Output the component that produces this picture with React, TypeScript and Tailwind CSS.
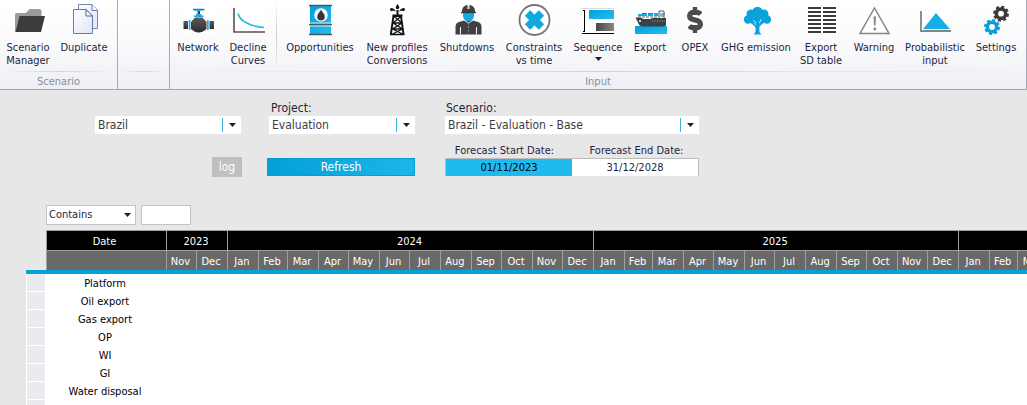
import type { ReactNode } from "react";
import { FaDollarSign } from "react-icons/fa";

const DAYS = [31, 28, 31, 30, 31, 30, 31, 31, 30, 31, 30, 31];
const NAMES = ["Jan", "Feb", "Mar", "Apr", "May", "Jun", "Jul", "Aug", "Sep", "Oct", "Nov", "Dec"];

type Year = { year: number; first: number };
const YEARS: Year[] = [
  { year: 2023, first: 10 },
  { year: 2024, first: 0 },
  { year: 2025, first: 0 },
  { year: 2026, first: 0 },
];

const daysIn = (year: number, month: number) =>
  month === 1 && year % 4 === 0 ? 29 : DAYS[month];

const MONTHS = YEARS.flatMap(({ year, first }) =>
  NAMES.map((name, month) => ({ year, month, name, days: daysIn(year, month) })).filter(
    (m) => m.month >= first,
  ),
);
const TOTAL_DAYS = MONTHS.reduce((sum, m) => sum + m.days, 0);

const ROWS = ["Platform", "Oil export", "Gas export", "OP", "WI", "GI", "Water disposal", ""];

function Icon({ children }: { children: ReactNode }) {
  return (
    <svg viewBox="0 0 32 32" className="size-8 shrink-0 overflow-visible" aria-hidden="true">
      {children}
    </svg>
  );
}

function Gradients() {
  return (
    <svg className="absolute size-0" aria-hidden="true">
      <defs>
        <linearGradient id="blue" x1="0" y1="0" x2="1" y2="1">
          <stop offset="0" stopColor="#009fd9" />
          <stop offset="1" stopColor="#27bdf0" />
        </linearGradient>
        <linearGradient id="dark" x1="0" y1="0" x2="0" y2="1">
          <stop offset="0" stopColor="#5c5c5c" />
          <stop offset="1" stopColor="#2c2c2c" />
        </linearGradient>
        <linearGradient id="gray" x1="0" y1="0" x2="1" y2="0">
          <stop offset="0" stopColor="#4a4646" />
          <stop offset="1" stopColor="#8a8686" />
        </linearGradient>
        <linearGradient id="page" x1="0" y1="0" x2="1" y2="1">
          <stop offset="0" stopColor="#ffffff" />
          <stop offset="1" stopColor="#dde6f5" />
        </linearGradient>
      </defs>
    </svg>
  );
}

const folder = (
  <Icon>
    <path d="M3 28V10.500q0-1.500 1.500-1.500H14l3.500-4H28l1.500 1.500V14H8L4 28z" fill="#9b9b9b" />
    <path d="M7.500 12H33l-4 16H3.500z" fill="#3b3b3b" />
  </Icon>
);

const duplicate = (
  <Icon>
    <path d="M10.500 .5H24l5.500 5.500v18.500h-19z" fill="url(#page)" stroke="#7587b5" />
    <path d="M24 .5v6h5.500" fill="#fff" stroke="#5f74a8" />
    <path d="M5.500 5.500H18l6.500 6.500v17.500h-19z" fill="url(#page)" stroke="#6479af" />
    <path d="M18 5.500v6.500h6.500z" fill="#fff" stroke="#4f659f" />
  </Icon>
);

const valve = (
  <Icon>
    <rect x="-1" y="3" width="34" height="26" fill="#fff" />
    <path d="M11 5.500h11.500" stroke="#3d7890" strokeWidth="1.500" />
    <path d="M12.500 6.500h8" stroke="#37b9e8" />
    <path d="M15.500 7h2.500v5h-2.500z" fill="#3a4a52" />
    <path d="M14 10h5.500v1.500h2V13H12v-1.500h2z" fill="#25a7dc" />
    <path d="M13 13.500h7.500l4 4.500v7l-3.500 2.500q-4.500 2-8.500 0L9 25v-7z" fill="url(#dark)" />
    <path d="M1.500 17H6v8H1.500zM27.500 17H32v8h-4.500z" fill="url(#dark)" />
    <path d="M6.800 16h1.700v10H6.800zM25 16h1.700v10H25z" fill="#1fb0e8" />
  </Icon>
);

const decline = (
  <Icon>
    <rect x="1" y="4" width="32" height="24" fill="#fff" />
    <path d="M2 4v24h31" fill="none" stroke="#595252" strokeWidth="1.600" />
    <path d="M6 9.500C8 18 20 22.500 32 23.500" fill="none" stroke="#23b7ec" strokeWidth="1.600" />
  </Icon>
);

const barrel = (
  <Icon>
    <rect x="6" y="2" width="21" height="28" fill="url(#blue)" />
    <path d="M5 1.500h23M5 20.500h23M5 30.500h23" stroke="#4b555a" strokeWidth="1.500" />
    <path d="M5 22h23M5 19h23" stroke="#fff" strokeWidth=".8" />
    <circle cx="17" cy="11" r="6.800" fill="#eefaff" />
    <path d="M17 5.500c1 2.700 3.800 4.500 3.800 7.200a3.800 3.800 0 0 1-7.600 0c0-2.700 2.800-4.500 3.800-7.200z" fill="#353535" />
  </Icon>
);

const derrick = (
  <Icon>
    <g fill="none" stroke="#111">
      <path d="M12.500 12h7.500l2.500 18.500M12.500 12L9.800 30.500" strokeWidth="1.900" />
      <path d="M12.500 12l8.500 7-9.500 6 11 5.500M20.500 12l-8.500 7 9.500 6-11 5.500M11.500 19h9.500M10.500 25h12M9 30.500h14.500" strokeWidth="1.300" />
      <path d="M11.500 11.500h10" strokeWidth="2" />
    </g>
    <path d="M15.500 6h2v5h-2z" fill="#111" />
    <path d="M16.500 0q2.500 3 1.500 4.500-1.500 1.500-3 0-1-1.500 1.500-4.500z" fill="#111" />
    <path d="M15 7.500q-1.500-3-4-3.500-2.500 0-2 2 1.500 2 3 .5zM18 7.500q1.500-3 4-3.500 2.500 0 2 2-1.500 2-3 .5z" fill="#111" />
  </Icon>
);

const worker = (
  <Icon>
    <path d="M4.500 30.500V23q0-4 3.500-5l5-1.500h9l5 1.500q3.500 1 3.500 5v7.500z" fill="#414141" />
    <path d="M9.500 23v7.500M25.500 23v7.500" stroke="#f4f4f4" />
    <path d="M17.500 19v11" stroke="#9a9a9a" strokeDasharray="1.500 2" />
    <path d="M12.500 16l5 3 5-3" fill="none" stroke="#fff" strokeWidth=".8" />
    <path d="M12 8.500h11v3.500q-.5 5-5.500 5T12 12z" fill="#16a9e2" />
    <path d="M11 8V6.500q.5-4.500 5-5.500h3q4.500 1 5 5.500V8z" fill="#414141" />
    <path d="M16.300 1h2.400v4h-2.400z" fill="#ccd1d3" />
    <path d="M10 8.500h15" stroke="#303a3e" strokeWidth="1.400" />
  </Icon>
);

const constraints = (
  <Icon>
    <circle cx="16.500" cy="16" r="15" fill="#fff" stroke="#757575" strokeWidth="1.800" />
    <path d="M9.500 9l14 14M23.500 9l-14 14" stroke="#12a8e0" strokeWidth="7.600" />
  </Icon>
);

const sequence = (
  <Icon>
    <rect x="0" y="4" width="32" height="26" fill="#fff" />
    <path d="M0 4.500h32" stroke="#dadada" />
    <path d="M2.500 6v22M1 6.500h2M1 27.500h2M0 29.500h32" stroke="#000" />
    <rect x="7" y="6" width="25" height="9" fill="url(#blue)" />
    <rect x="14" y="19" width="18" height="8" fill="url(#gray)" />
  </Icon>
);

const ship = (
  <Icon>
    <rect x="1" y="6" width="32" height="24" fill="#fff" />
    <rect x="1" y="22" width="32" height="8" fill="url(#blue)" />
    <path d="M1.500 13.500H7l2 1.500h8l1-1h14v7q-1 1.500-3 1.500H8q-3-.5-4-4z" fill="#3e4143" />
    <circle cx="6" cy="17" r="1" fill="#fff" />
    <path d="M18 17h13" stroke="#a6a6a6" strokeDasharray="1 1.500" />
    <path d="M4 12v-2h4V9h5v3zM14 12V9h5v3zM20 12V9h4v3z" fill="#1ba9df" />
    <path d="M4 13h20M8 9.500h5M14 9.500h5" stroke="#406a7c" strokeDasharray="3 1" />
    <path d="M25 14V7h5v7M26 10h5M26 12h4" fill="none" stroke="#3d6473" />
  </Icon>
);

const dollar = (
  <span className="flex size-8 items-center justify-center">
    <FaDollarSign className="size-[26px] text-[#4c4c4e]" stroke="currentColor" strokeWidth="24" aria-hidden="true" />
  </span>
);

const tree = (
  <Icon>
    <g fill="#0aa3dc">
      <circle cx="17.500" cy="8" r="5.200" />
      <circle cx="11" cy="10" r="4.500" />
      <circle cx="24" cy="10" r="4.500" />
      <circle cx="8" cy="15.500" r="4.200" />
      <circle cx="27" cy="15.500" r="4.200" />
      <ellipse cx="17.500" cy="14" rx="9" ry="6" />
      <path d="M16 18h3l.5 10 2 2.500h-8l2-2.500z" />
    </g>
    <path d="M17 25q-1-4-6-6.500M18 24q1-3.500 6-6" fill="none" stroke="#0aa3dc" strokeWidth="1.600" />
    <path d="M16 19l-2.500-2.500M19.500 18.500l1.500-3" stroke="#fff" strokeWidth=".9" />
  </Icon>
);

const sdTable = (
  <Icon>
    <path
      d="M3 4h13M18 4h13M3 8h13M18 8h13M3 12h13M18 12h13M3 16h13M18 16h13M3 20h13M18 20h13M3 24h13M18 24h13M3 28h13M18 28h13"
      stroke="#3b3b3b"
      strokeWidth="2"
    />
  </Icon>
);

const warning = (
  <Icon>
    <path d="M16.500 4L31 29.500H2z" fill="#fff" stroke="#858585" strokeWidth="1.500" />
    <path d="M15.500 12.500h2.500l-.5 9h-1.500z" fill="#858585" />
    <circle cx="16.800" cy="25" r="1.400" fill="#858585" />
  </Icon>
);

const probabilistic = (
  <Icon>
    <rect x="1" y="7" width="31" height="21" fill="#fff" />
    <path d="M2 7v20h30" fill="none" stroke="#858585" strokeWidth="1.800" />
    <path d="M17 9l14 16H4z" fill="#16aee6" />
  </Icon>
);

function Gear({ cx, cy, color }: { cx: number; cy: number; color: string }) {
  return (
    <g fill="none" stroke={color}>
      <circle cx={cx} cy={cy} r="4.700" strokeWidth="3.600" />
      <circle cx={cx} cy={cy} r="6.800" strokeWidth="2.400" strokeDasharray="3 2.340" />
    </g>
  );
}

const gears = (
  <Icon>
    <Gear cx={21} cy={9.700} color="#3c3a3b" />
    <Gear cx={12} cy={23} color="#079fd9" />
  </Icon>
);

function RibbonButton({
  icon,
  lines,
  width,
  menu,
}: {
  icon: ReactNode;
  lines: string[];
  width: string;
  menu?: boolean;
}) {
  return (
    <button type="button" className={`flex shrink-0 flex-col items-center pt-1 text-[#1e1f3f] ${width}`}>
      {icon}
      <span className="mt-[5px] flex flex-col items-center text-[11px] leading-[13px] whitespace-nowrap">
        {lines.map((line) => (
          <span key={line}>{line}</span>
        ))}
      </span>
      {menu && <Caret className="mt-[3px]" />}
    </button>
  );
}

function Caret({ className = "" }: { className?: string }) {
  return (
    <svg viewBox="0 0 7 4" className={`h-1 w-[7px] text-[#1e1f3f] ${className}`} aria-hidden="true">
      <path d="M0 0h7L3.500 4z" fill="currentColor" />
    </svg>
  );
}

function RibbonGroup({
  label,
  className,
  children,
}: {
  label: string;
  className: string;
  children?: ReactNode;
}) {
  return (
    <section className={`flex flex-col border-r border-[#a9abb3] ${className}`}>
      <div className="flex h-[71px] px-1">{children}</div>
      <div className="mx-1 h-px bg-linear-to-r from-transparent via-[#d3d4d9] to-transparent" />
      <h2 className="h-[17px] text-center text-[11px] leading-[19px] text-[#8c8d9b]">{label}</h2>
    </section>
  );
}

function Ribbon() {
  return (
    <header className="flex border-b border-[#a4a5ad] bg-linear-to-b from-white via-[#fafafc] to-[#eeeff4]">
      <RibbonGroup label="Scenario" className="w-[118px] shrink-0">
        <RibbonButton icon={folder} lines={["Scenario", "Manager"]} width="w-12" />
        <RibbonButton icon={duplicate} lines={["Duplicate"]} width="w-16" />
      </RibbonGroup>
      <RibbonGroup label="" className="w-13 shrink-0" />
      <RibbonGroup label="Input" className="min-w-0 grow">
        <RibbonButton icon={valve} lines={["Network"]} width="w-12" />
        <RibbonButton icon={decline} lines={["Decline", "Curves"]} width="w-13" />
        <div className="mr-[3px] ml-[2px] w-px shrink-0 bg-linear-to-b from-transparent via-[#c9cad0] to-transparent" />
        <RibbonButton icon={barrel} lines={["Opportunities"]} width="w-20" />
        <RibbonButton icon={derrick} lines={["New profiles", "Conversions"]} width="w-[74px]" />
        <RibbonButton icon={worker} lines={["Shutdowns"]} width="w-[66px]" />
        <RibbonButton icon={constraints} lines={["Constraints", "vs time"]} width="w-17" />
        <RibbonButton icon={sequence} lines={["Sequence"]} width="w-15" menu />
        <RibbonButton icon={ship} lines={["Export"]} width="w-11" />
        <RibbonButton icon={dollar} lines={["OPEX"]} width="w-[46px]" />
        <RibbonButton icon={tree} lines={["GHG emission"]} width="w-19" />
        <RibbonButton icon={sdTable} lines={["Export", "SD table"]} width="w-[54px]" />
        <RibbonButton icon={warning} lines={["Warning"]} width="w-13" />
        <RibbonButton icon={probabilistic} lines={["Probabilistic", "input"]} width="w-[70px]" />
        <RibbonButton icon={gears} lines={["Settings"]} width="w-13" />
      </RibbonGroup>
    </header>
  );
}

function Picker({ id, value, name }: { id: string; value: string; name?: string }) {
  return (
    <div className="relative bg-white">
      <select
        id={id}
        aria-label={name}
        className="block h-[18px] w-full appearance-none pr-6 pl-[3px] text-xs text-[#3c3c48] outline-none"
      >
        <option>{value}</option>
      </select>
      <span className="pointer-events-none absolute inset-y-0.5 right-0 flex w-[19px] items-center justify-center border-l border-[#35b5e0] pl-px">
        <Caret />
      </span>
    </div>
  );
}

function Filters() {
  return (
    <section className="flex pt-2.5 pl-[95px] text-[#1e1f3f]">
      <div className="mr-[25px] flex w-[147px] flex-col">
        <div className="mt-4 pr-px">
          <Picker id="country" value="Brazil" name="Country" />
        </div>
        <button
          type="button"
          className="mt-[23px] h-5 w-[30px] self-end bg-[#bfbfbf] text-xs leading-5 text-white"
        >
          log
        </button>
      </div>
      <div className="mr-[30px] w-[148px]">
        <div className="pl-0.5">
          <label htmlFor="project" className="block h-4 pl-0.5 text-xs">
            Project:
          </label>
          <Picker id="project" value="Evaluation" />
        </div>
        <button
          type="button"
          className="mt-6 block h-[18px] w-full border border-[#0a9dd4] bg-linear-to-r from-[#049fd9] to-[#1bb6ea] text-xs leading-4 text-white"
        >
          Refresh
        </button>
      </div>
      <div className="w-[254px]">
        <label htmlFor="scenario" className="block h-4 pl-px text-xs">
          Scenario:
        </label>
        <Picker id="scenario" value="Brazil - Evaluation - Base" />
        <div className="mt-2 grid grid-cols-2 text-center text-[11px]">
          <label htmlFor="start" className="h-4 pr-2 leading-[18px]">
            Forecast Start Date:
          </label>
          <label htmlFor="end" className="h-4 pl-0.5 leading-[18px]">
            Forecast End Date:
          </label>
          <input
            id="start"
            defaultValue="01/11/2023"
            className="h-[18px] w-full min-w-0 border-t border-l border-[#bcbcbc] bg-[#1fbaee] text-center text-black outline-none"
          />
          <input
            id="end"
            defaultValue="31/12/2028"
            className="h-[18px] w-full min-w-0 border-t border-r border-[#bcbcbc] bg-white text-center outline-none"
          />
        </div>
      </div>
    </section>
  );
}

function Search() {
  return (
    <section className="mt-7 flex gap-[5px] pl-[46px]">
      <div className="relative w-[90px] border border-[#c3c4cb] bg-white">
        <select
          aria-label="Filter condition"
          className="block h-[18px] w-full appearance-none pl-[2px] text-[11px] text-[#1e1f3f] outline-none"
        >
          <option>Contains</option>
        </select>
        <span className="pointer-events-none absolute inset-y-0 right-1 flex items-center">
          <Caret />
        </span>
      </div>
      <input
        aria-label="Filter text"
        className="h-5 w-[50px] border border-[#c3c4cb] bg-white px-1 text-[11px] outline-none"
      />
    </section>
  );
}

function Schedule() {
  return (
    <section className="mt-[5px] grow overflow-hidden pl-[26px]">
      <table
        className="table-fixed border-separate border-spacing-0 text-center text-[11px]"
        style={{ width: 140 + TOTAL_DAYS }}
      >
        <colgroup>
          <col className="w-5" />
          <col className="w-[120px]" />
          {MONTHS.map((m) => (
            <col key={`${m.year}-${m.month}`} style={{ width: m.days }} />
          ))}
        </colgroup>
        <thead className="text-white">
          <tr className="h-5">
            <td />
            <th
              scope="col"
              className="border-t border-l border-[#a0a0a0] bg-black p-0 pt-0.5 pr-1 leading-[17px] font-normal"
            >
              Date
            </th>
            {YEARS.map(({ year, first }) => (
              <th
                key={year}
                scope="colgroup"
                colSpan={12 - first}
                className="border-t border-l border-[#a0a0a0] bg-black p-0 pt-0.5 pr-0.5 leading-[17px] font-normal"
              >
                {year}
              </th>
            ))}
          </tr>
          <tr className="h-5">
            <td />
            <td className="border-t border-l border-[#a0a0a0] bg-[#696969]" />
            {MONTHS.map((m) => (
              <th
                key={`${m.year}-${m.month}`}
                scope="col"
                className="border-t border-l border-[#a0a0a0] bg-[#696969] p-0 pt-0.5 pr-0.5 leading-[17px] font-normal"
              >
                {m.name}
              </th>
            ))}
          </tr>
          <tr className="h-1">
            <td colSpan={MONTHS.length + 2} className="bg-[#00a3da] p-0" />
          </tr>
        </thead>
        <tbody className="bg-white text-black">
          {ROWS.map((row) => (
            <tr key={row} className="h-[18px]">
              <td className="border-r border-b border-l border-white bg-[#eaebef] p-0" />
              <th scope="row" className="p-0 pr-0.5 leading-[17px] font-normal">
                {row}
              </th>
              <td colSpan={MONTHS.length} className="p-0" />
            </tr>
          ))}
        </tbody>
      </table>
    </section>
  );
}

export default function App() {
  return (
    <div className="flex h-screen flex-col overflow-hidden bg-[#e7e7e7] font-['DejaVu_Sans_Condensed','Noto_Sans',sans-serif]">
      <Gradients />
      <Ribbon />
      <main className="flex min-h-0 grow flex-col">
        <Filters />
        <Search />
        <Schedule />
      </main>
    </div>
  );
}
